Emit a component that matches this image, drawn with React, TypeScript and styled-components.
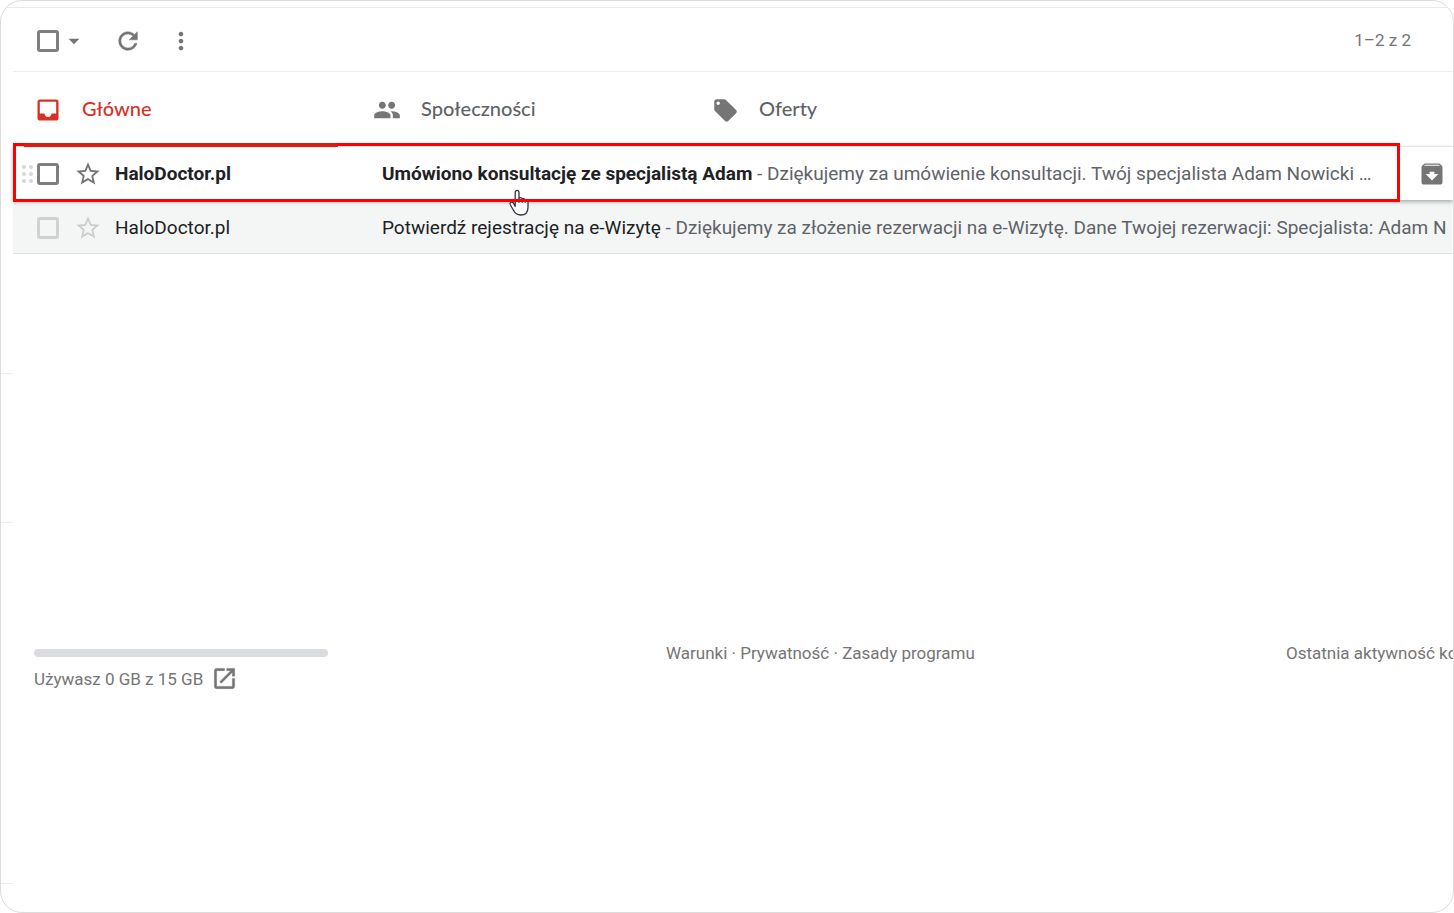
import React from "react";
import styled, { createGlobalStyle } from "styled-components";
import {
  MdArchive,
  MdArrowDropDown,
  MdInbox,
  MdLocalOffer,
  MdMoreVert,
  MdOpenInNew,
  MdPeople,
  MdRefresh,
  MdStarBorder,
} from "react-icons/md";

const GlobalStyle = createGlobalStyle`
  * { box-sizing: border-box; }
  body {
    margin: 0;
    background: #fff;
    color: #202124;
    font-family: Roboto, "Liberation Sans", sans-serif;
    font-size: 19px;
  }
`;

const Frame = styled.div`
  display: flex;
  flex-direction: column;
  min-height: 100vh;
  overflow: hidden;
  border: 1px solid #dcdcdc;
  border-radius: 22px;
`;

const TopEdge = styled.div`
  height: 7px;
  border-bottom: 1px solid #e6eaea;
`;

const Body = styled.div`
  display: flex;
  flex: 1;
`;

const Rail = styled.div`
  flex: 0 0 12px;
`;

const RailSection = styled.div<{ $height: number }>`
  height: ${(p) => p.$height}px;
  border-bottom: 1px solid #ebeeee;
`;

const Main = styled.main`
  flex: 1;
  min-width: 0;
`;

const Toolbar = styled.div`
  display: flex;
  align-items: center;
  height: 64px;
  padding: 2px 42px 0 24px;
  border-bottom: 1px solid #eceff0;
`;

const IconButton = styled.button<{ $left?: number; $color?: string; $heavy?: boolean }>`
  display: flex;
  flex: none;
  margin: 0 0 0 ${(p) => p.$left ?? 0}px;
  padding: 0;
  border: 0;
  background: none;
  color: ${(p) => p.$color ?? "#757575"};
  cursor: pointer;

  path:not([fill="none"]) {
    stroke-width: ${(p) => (p.$heavy ? 0.4 : 0)};
  }
`;

const Checkbox = styled.input.attrs({ type: "checkbox" })<{ $faint?: boolean }>`
  appearance: none;
  flex: none;
  width: 22px;
  height: 22px;
  margin: 0;
  border: 3px solid ${(p) => (p.$faint ? "#d0d2d2" : "#7f7f7f")};
  border-radius: 3px;
`;

const Count = styled.span`
  margin-left: auto;
  padding-bottom: 2px;
  color: #757575;
  font-size: 17px;
  line-height: 22px;
`;

const Tabs = styled.div`
  display: flex;
  height: 74px;
`;

const Tab = styled.button<{ $active?: boolean }>`
  position: relative;
  display: flex;
  flex: 0 1 339px;
  align-items: center;
  gap: 20px;
  padding: 2px 21px 0;
  border: 0;
  background: none;
  color: ${(p) => (p.$active ? "#d93025" : "#5f6368")};
  font-family: Lato, sans-serif;
  font-size: 20px;
  font-weight: 500;
  text-align: left;

  svg {
    flex: none;
    color: ${(p) => (p.$active ? "#d93025" : "#757575")};
  }

  &::after {
    content: "";
    display: ${(p) => (p.$active ? "block" : "none")};
    position: absolute;
    right: 14px;
    bottom: -1px;
    left: 11px;
    height: 4px;
    border-radius: 4px 4px 0 0;
    background: #e21b12;
    z-index: 2;
  }
`;

const TabLabel = styled.span`
  padding-bottom: 4px;
`;

const Row = styled.div<{ $read?: boolean }>`
  position: relative;
  display: flex;
  align-items: center;
  height: 54px;
  padding: 2px 0 0 9px;
  border-top: 1px solid ${(p) => (p.$read ? "transparent" : "#e3e6e6")};
  border-bottom: 1px solid ${(p) => (p.$read ? "#dfe5e4" : "transparent")};
  background: ${(p) => (p.$read ? "#f4f6f6" : "#fff")};
  z-index: ${(p) => (p.$read ? 0 : 1)};
  box-shadow: ${(p) => (p.$read ? "none" : "0 2px 4px rgba(60, 64, 67, 0.4)")};
`;

const Handle = styled.svg`
  flex: none;
  width: 15px;
  height: 20px;
  fill: #d6d6d6;
`;

const Sender = styled.span<{ $bold?: boolean }>`
  flex: 0 0 267px;
  margin-left: 13px;
  line-height: 24px;
  font-weight: ${(p) => (p.$bold ? 700 : 400)};
`;

const Line = styled.a<{ $clip?: boolean }>`
  flex: 1;
  min-width: 0;
  overflow: hidden;
  line-height: 24px;
  white-space: nowrap;
  text-overflow: ${(p) => (p.$clip ? "clip" : "ellipsis")};
  color: #5f6368;
  text-decoration: none;
`;

const Subject = styled.span<{ $bold?: boolean }>`
  color: #202124;
  font-weight: ${(p) => (p.$bold ? 700 : 400)};
`;

const RowActions = styled.div`
  display: flex;
  flex: 0 0 66px;
  padding-left: 31px;
`;

const Highlight = styled.div`
  position: absolute;
  top: -4px;
  right: 53px;
  bottom: -3px;
  left: 0;
  border: 3px solid #f00;
  pointer-events: none;
`;

const Pointer = styled.svg`
  position: absolute;
  top: 42px;
  left: 495px;
  width: 22px;
  height: 28px;
`;

const Footer = styled.footer`
  display: grid;
  grid-template-columns: 632fr 620fr 167fr;
  margin-top: 387px;
  padding-left: 21px;
  color: #757575;
  font-size: 17px;
  line-height: 24px;
  white-space: nowrap;

  a {
    color: inherit;
    text-decoration: none;
  }
`;

const Storage = styled.div`
  padding-top: 8px;
`;

const Meter = styled.div`
  width: 294px;
  height: 8px;
  border-radius: 4px;
  background: #dadce0;
`;

const Usage = styled.div`
  display: flex;
  align-items: center;
  gap: 8px;
  margin-top: 8px;
`;

const Activity = styled.div`
  min-width: 0;
  overflow: hidden;
`;

const DragHandle = () => (
  <Handle viewBox="0 0 15 20" aria-hidden="true">
    {[3, 10, 17].map((y) => (
      <React.Fragment key={y}>
        <circle cx="2" cy={y} r="2" />
        <circle cx="9" cy={y} r="2" />
      </React.Fragment>
    ))}
  </Handle>
);

export default function App() {
  return (
    <>
      <GlobalStyle />
      <Frame>
        <TopEdge />
        <Body>
          <Rail>
            <RailSection $height={366} />
            <RailSection $height={149} />
            <RailSection $height={361} />
          </Rail>
          <Main>
            <Toolbar>
              <Checkbox aria-label="Zaznacz" />
              <IconButton $left={2} aria-label="Opcje zaznaczania">
                <MdArrowDropDown size={26} />
              </IconButton>
              <IconButton $left={27} $heavy aria-label="Odśwież">
                <MdRefresh size={28} />
              </IconButton>
              <IconButton $left={25} aria-label="Więcej">
                <MdMoreVert size={28} />
              </IconButton>
              <Count>1–2 z 2</Count>
            </Toolbar>
            <Tabs>
              <Tab $active>
                <MdInbox size={28} />
                <TabLabel>Główne</TabLabel>
              </Tab>
              <Tab>
                <MdPeople size={28} />
                <TabLabel>Społeczności</TabLabel>
              </Tab>
              <Tab>
                <MdLocalOffer size={27} />
                <TabLabel>Oferty</TabLabel>
              </Tab>
            </Tabs>
            <Row>
              <DragHandle />
              <Checkbox aria-label="Zaznacz wiadomość" />
              <IconButton $left={15} aria-label="Oznacz gwiazdką">
                <MdStarBorder size={28} />
              </IconButton>
              <Sender $bold>HaloDoctor.pl</Sender>
              <Line href="#konsultacja">
                <Subject $bold>Umówiono konsultację ze specjalistą Adam</Subject>
                {" - Dziękujemy za umówienie konsultacji. Twój specjalista Adam Nowicki …"}
              </Line>
              <RowActions>
                <IconButton aria-label="Archiwizuj">
                  <MdArchive size={28} />
                </IconButton>
              </RowActions>
              <Pointer viewBox="0 0 22 28" aria-hidden="true">
                <path
                  d="M7.2 17.5V3.6c0-3 3.8-3 3.8 0v5.6c.8-1.1 3-.8 3.2.8.9-.8 2.6-.4 2.9 1 1.4-.6 2.9.2 2.9 1.8v5.4c0 5-2.6 7.8-7.4 7.8-4 0-5.7-1.9-7.3-5L2.2 15.5c-1-2 1.6-3.4 3-1.6z"
                  fill="#fff"
                  stroke="#33343f"
                  strokeWidth="1.3"
                  strokeLinejoin="round"
                />
                <path d="M11 9v5M14.2 10v4M17.1 11v3" stroke="#33343f" strokeWidth="1.1" fill="none" />
              </Pointer>
              <Highlight />
            </Row>
            <Row $read>
              <Handle as="span" />
              <Checkbox $faint aria-label="Zaznacz wiadomość" />
              <IconButton $left={15} $color="#cdcfcf" aria-label="Oznacz gwiazdką">
                <MdStarBorder size={28} />
              </IconButton>
              <Sender>HaloDoctor.pl</Sender>
              <Line $clip href="#rejestracja">
                <Subject>Potwierdź rejestrację na e-Wizytę</Subject>
                {" - Dziękujemy za złożenie rezerwacji na e-Wizytę. Dane Twojej rezerwacji: Specjalista: Adam N"}
              </Line>
            </Row>
            <Footer>
              <Storage>
                <Meter />
                <Usage>
                  <span>Używasz 0 GB z 15 GB</span>
                  <IconButton aria-label="Zarządzaj miejscem" $heavy>
                    <MdOpenInNew size={27} />
                  </IconButton>
                </Usage>
              </Storage>
              <div>
                <a href="#warunki">Warunki</a> · <a href="#prywatnosc">Prywatność</a> ·{" "}
                <a href="#zasady">Zasady programu</a>
              </div>
              <Activity>Ostatnia aktywność konta</Activity>
            </Footer>
          </Main>
        </Body>
      </Frame>
    </>
  );
}
